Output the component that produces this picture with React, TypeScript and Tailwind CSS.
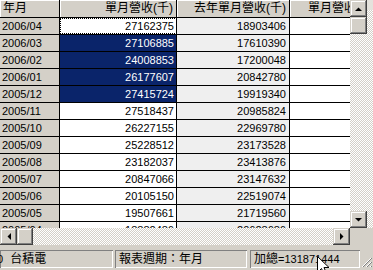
import React from "react";

const rows: [string, string, string][] = [
  ["2006/04", "27162375", "18903406"],
  ["2006/03", "27106885", "17610390"],
  ["2006/02", "24008853", "17200048"],
  ["2006/01", "26177607", "20842780"],
  ["2005/12", "27415724", "19919340"],
  ["2005/11", "27518437", "20985824"],
  ["2005/10", "26227155", "22969780"],
  ["2005/09", "25228512", "23173528"],
  ["2005/08", "23182037", "23413876"],
  ["2005/07", "20847066", "23147632"],
  ["2005/06", "20105150", "22519074"],
  ["2005/05", "19507661", "21719560"],
  ["2005/04", "18882486", "20628686"],
];

const btn =
  "bg-[#d4d0c8] shadow-[inset_-1px_-1px_#404040,inset_1px_1px_#d4d0c8,inset_-2px_-2px_#808080,inset_2px_2px_#ffffff] flex items-center justify-center";
const checker =
  "bg-[image:repeating-conic-gradient(#d4d0c8_0%_25%,#ffffff_0%_50%)] bg-[length:2px_2px]";
const sunken = "shadow-[inset_1px_1px_#808080,inset_-1px_-1px_#ffffff]";

function Arrow({ dir }: { dir: "up" | "down" | "left" | "right" }) {
  const pts: Record<string, string> = {
    up: "0,4 7,4 3.5,0.5",
    down: "0,0 7,0 3.5,3.5",
    left: "4,0 4,7 0.5,3.5",
    right: "0,0 0,7 3.5,3.5",
  };
  const w = dir === "up" || dir === "down" ? 7 : 4;
  const h = dir === "up" || dir === "down" ? 4 : 7;
  return (
    <svg width={w} height={h} viewBox={`0 0 ${w} ${h}`}>
      <polygon points={pts[dir]} fill="#000" />
    </svg>
  );
}

export default function App() {
  return (
    <div
      className="relative w-[373px] h-[270px] overflow-hidden bg-[#d4d0c8] text-black"
      style={{ fontFamily: '"Liberation Sans", "Noto Sans CJK TC", sans-serif' }}
    >
      <div className="flex h-[228px]">
        {/* grid */}
        <div className="w-[350px] h-[228px] overflow-hidden flex flex-col">
          <div className="flex h-[18px] shrink-0 border-b border-black text-[12px] leading-[17px]">
            <div className="w-[60px] shrink-0 border-r border-black bg-[#d4d0c8] pl-[3px] shadow-[inset_1px_1px_#ffffff]">
              年月
            </div>
            <div className="w-[117px] shrink-0 border-r border-black bg-[#d4d0c8] pr-[3px] text-right shadow-[inset_1px_1px_#ffffff]">
              單月營收(千)
            </div>
            <div className="w-[113px] shrink-0 border-r border-black bg-[#d4d0c8] pr-[3px] text-right shadow-[inset_1px_1px_#ffffff]">
              去年單月營收(千)
            </div>
            <div className="w-[60px] shrink-0 bg-[#d4d0c8] pl-[18px] whitespace-nowrap overflow-hidden shadow-[inset_1px_1px_#ffffff]">
              單月營收
            </div>
          </div>
          {rows.map(([m, a, b], i) => {
            const sel = i >= 1 && i <= 4;
            const focus = i === 0;
            return (
              <div
                key={m}
                className="flex h-[17px] shrink-0 border-b border-black text-[11px] leading-[16px]"
              >
                <div className="w-[60px] shrink-0 border-r border-black bg-[#d4d0c8] pl-[2px]">
                  {m}
                </div>
                <div
                  className={
                    "w-[117px] shrink-0 border-r border-black pr-[2px] text-right " +
                    (sel
                      ? "bg-[#0a246a] text-white"
                      : focus
                      ? "bg-white outline-1 outline-dotted outline-black -outline-offset-1"
                      : "bg-white")
                  }
                >
                  {a}
                </div>
                <div className="w-[113px] shrink-0 border-r border-black bg-[#efefef] pr-[3px] text-right">
                  {b}
                </div>
                <div className="w-[60px] shrink-0 bg-white"></div>
              </div>
            );
          })}
        </div>
        {/* vertical scrollbar */}
        <div className={"w-[23px] h-[228px] flex " + checker}>
          <div className="w-[17px] flex flex-col">
            <div className={"h-[17px] " + btn}>
              <Arrow dir="up" />
            </div>
            <div className={"h-[17px] " + btn}></div>
            <div className="flex-1"></div>
            <div className={"h-[17px] " + btn}>
              <Arrow dir="down" />
            </div>
          </div>
          <div className="w-[6px] flex flex-col">
            <div className="h-[10px] bg-[#e4e2dc]"></div>
          </div>
        </div>
      </div>
      {/* horizontal scrollbar */}
      <div className="flex h-[17px]">
        <div className={"w-[350px] flex " + checker}>
          <div className={"w-[17px] " + btn}>
            <Arrow dir="left" />
          </div>
          <div className={"w-[16px] " + btn}></div>
          <div className="flex-1"></div>
          <div className={"w-[17px] " + btn}>
            <Arrow dir="right" />
          </div>
        </div>
        <div className="flex-1 bg-[#d4d0c8]"></div>
      </div>
      {/* status bar */}
      <div className="h-[25px] pt-[5px] flex items-start bg-[#d4d0c8]">
        <div
          className={
            "w-[113px] h-[18px] flex items-center overflow-hidden whitespace-nowrap " + sunken
          }
        >
          <span className="text-[11px] ml-[-3px]">0</span>
          <span className="text-[12px] ml-[7px]">台積電</span>
        </div>
        <div
          className={
            "ml-[2px] w-[132px] h-[18px] flex items-center pl-[4px] text-[12px] whitespace-nowrap " +
            sunken
          }
        >
          報表週期：年月
        </div>
        <div
          className={
            "ml-[3px] w-[110px] h-[18px] flex items-center pl-[4px] whitespace-nowrap " + sunken
          }
        >
          <span className="text-[12px]">加總</span>
          <span className="text-[11px]">=131871444</span>
        </div>
        <div className="flex-1 h-[18px] flex items-end justify-end pr-[1px]">
          <svg width="11" height="11" viewBox="0 0 11 11">
            <line x1="10" y1="1" x2="1" y2="10" stroke="#fff" />
            <line x1="11" y1="1" x2="2" y2="10" stroke="#808080" />
            <line x1="10" y1="5" x2="5" y2="10" stroke="#fff" />
            <line x1="11" y1="5" x2="6" y2="10" stroke="#808080" />
            <line x1="10" y1="9" x2="9" y2="10" stroke="#fff" />
            <line x1="11" y1="9" x2="10" y2="10" stroke="#808080" />
          </svg>
        </div>
      </div>
      {/* mouse cursor */}
      <svg
        className="absolute left-[317px] top-[256px]"
        width="13"
        height="20"
        viewBox="0 0 13 20"
      >
        <path
          d="M0.5 0.5 L0.5 16.5 L4.5 12.5 L7 18.5 L9.5 17.5 L7 11.5 L12 11.5 Z"
          fill="#fff"
          stroke="#000"
          strokeWidth="1"
        />
      </svg>
    </div>
  );
}
